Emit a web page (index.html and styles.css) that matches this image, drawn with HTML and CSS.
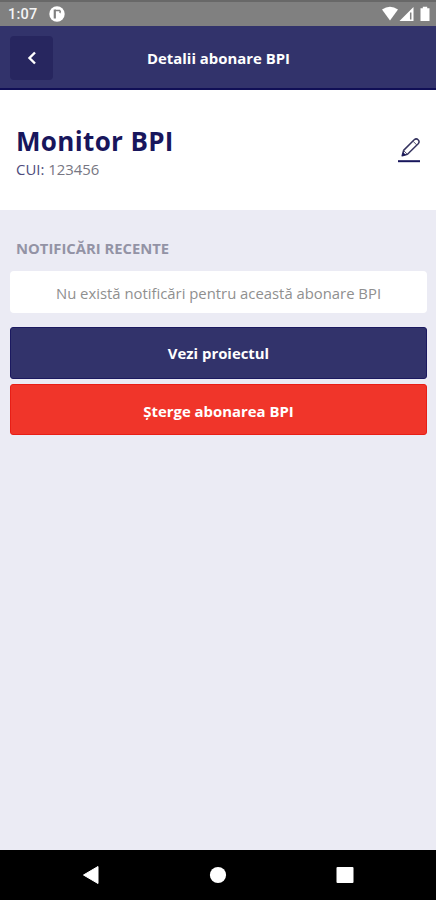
FILE: index.html
```html
<!DOCTYPE html>
<html lang="ro">
<head>
    <meta charset="UTF-8">
    <meta name="viewport" content="width=device-width, initial-scale=1.0">
    <title>Detalii abonare BPI</title>

    <link rel="stylesheet" href="styles.css">
</head>
<body>

    <div class="statusBar">
        <span class="hora">1:07</span>
        <svg class="appIcon" width="16" height="16" viewBox="0 0 16 16">
            <circle cx="8" cy="8" r="7.7" fill="#fff"/>
            <path d="M5.8 3.5V12.5" fill="none" stroke="#808080" stroke-width="2.2"/>
            <path d="M6 4.4H10.6Q11.8 5.5 10.8 7" fill="none" stroke="#808080" stroke-width="1.5"/>
        </svg>
        <svg class="sysIcons" width="49" height="16" viewBox="0 0 49 16">
            <path d="M0 3.6Q8 -2 16 3.6L8 14.4Z" fill="#fff"/>
            <path d="M17.5 15L31.5 1V15Z" fill="#fff"/>
            <path d="M28.7 6.5V13.5" stroke="#808080" stroke-width="1.5"/>
            <path d="M38.5 2.2h2.3V.7h4.4v1.5h2.3V15h-9z" fill="#fff"/>
        </svg>
    </div>

    <header class="topo">
        <button class="voltar" aria-label="Înapoi">
            <svg width="12" height="16" viewBox="0 0 12 16">
                <path d="M9 2.5L3.5 8L9 13.5" fill="none" stroke="#fff" stroke-width="2.4"/>
            </svg>
        </button>
        <h1>Detalii abonare BPI</h1>
    </header>

    <section class="monitor">
        <div>
            <h2>Monitor BPI</h2>
            <p><span>CUI:</span> 123456</p>
        </div>
        <svg class="editar" width="24" height="26" viewBox="0 0 24 26">
            <path d="M1 24.2H23" stroke="#18165c" stroke-width="2"/>
            <path d="M5.2 18.8L6.6 13.4L17.2 2.8Q19.3 1 21.1 2.8Q23 4.6 21.2 6.7L10.5 17.2Z" fill="none" stroke="#35335f" stroke-width="1.5" stroke-linejoin="round"/>
            <path d="M16 4.2L19.8 8M6.6 13.6L10.3 17.2" fill="none" stroke="#55536f" stroke-width="1"/>
            <path d="M5 19L6 15L9 18Z" fill="#18165c"/>
        </svg>
    </section>

    <main>
        <h3>NOTIFICĂRI RECENTE</h3>
        <div class="aviso">Nu există notificări pentru această abonare BPI</div>
        <button class="botao">Vezi proiectul</button>
        <button class="botao vermelho">Şterge abonarea BPI</button>
    </main>

    <nav class="navBar">
        <svg width="18" height="20" viewBox="0 0 18 20">
            <path d="M1.5 10L16 1.5V18.5Z" fill="#fff" stroke="#fff" stroke-linejoin="round"/>
        </svg>
        <svg width="18" height="20" viewBox="0 0 18 20">
            <circle cx="9" cy="10" r="8.1" fill="#fff"/>
        </svg>
        <svg width="18" height="20" viewBox="0 0 18 20">
            <rect x=".5" y="2" width="17" height="16" rx="1" fill="#fff"/>
        </svg>
    </nav>

</body>
</html>
```
FILE: styles.css
```css
*{
    border: 0;
    margin: 0;
    padding: 0;
    box-sizing: border-box;
}

body{
    height: 100vh;
    display: flex;
    flex-direction: column;
    background-color: #ebebf4;
    font-family: "Open Sans", sans-serif;
    overflow: hidden;
}

.statusBar{
    height: 26px;
    padding: 0 5px 0 8px;
    display: flex;
    align-items: center;
    background-color: #808080;
    border-top: 2px solid #686868;
}

.hora{
    width: 41px;
    color: #f4f4f4;
    font-family: Roboto, sans-serif;
    font-size: 14.5px;
    font-weight: 500;
    letter-spacing: 0.2px;
}

.sysIcons{
    margin-left: auto;
}

.topo{
    height: 64px;
    padding: 2px 52px 0 10px;
    display: flex;
    align-items: center;
    background-color: #32336b;
    border-bottom: 2px solid #100f56;
}

.voltar{
    width: 43px;
    height: 44px;
    display: flex;
    align-items: center;
    justify-content: center;
    background-color: #27265f;
    border-radius: 4px;
}

.topo h1{
    flex: 1;
    color: #fff;
    font-size: 14.9px;
    text-align: center;
}

.monitor{
    height: 120px;
    padding: 0 15px 0 16px;
    display: flex;
    align-items: center;
    justify-content: space-between;
    background-color: #fff;
}

.monitor h2{
    padding-top: 3px;
    color: #18165c;
    font-size: 26px;
    line-height: 34px;
    letter-spacing: 0.35px;
}

.monitor p{
    color: #777783;
    font-size: 14.9px;
    line-height: 22px;
}

.monitor p span{
    color: #4e4c7c;
}

main{
    flex: 1;
    padding: 27px 9px 0 10px;
    display: flex;
    flex-direction: column;
}

main h3{
    padding-left: 6px;
    margin-bottom: 12px;
    color: #9393a5;
    font-size: 14.8px;
    line-height: 22px;
}

.aviso{
    height: 42px;
    margin-bottom: 14px;
    color: #8f8f8f;
    background-color: #fff;
    border-radius: 4px;
    font-size: 14.85px;
    line-height: 44px;
    text-align: center;
}

.botao{
    height: 52px;
    margin-bottom: 5px;
    color: #fff;
    background-color: #32336b;
    border: 1px solid #1b1960;
    border-radius: 3px;
    font-family: inherit;
    font-size: 14.9px;
    font-weight: bold;
}

.vermelho{
    height: 51px;
    padding-top: 2px;
    background-color: #f0352a;
    border-color: #e81e16;
}

.navBar{
    height: 50px;
    padding: 0 82px;
    display: flex;
    align-items: center;
    justify-content: space-between;
    background-color: #000;
}
```
